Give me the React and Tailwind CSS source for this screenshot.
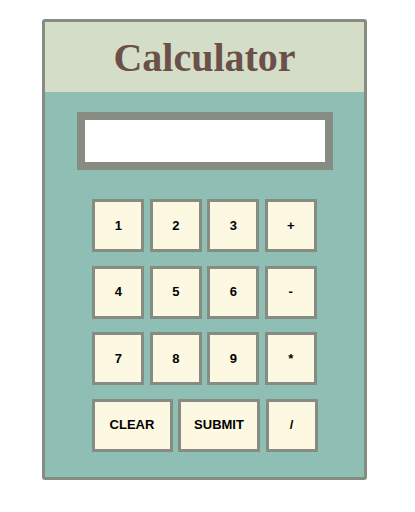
export default function App() {
  const rows = [
    ["1", "2", "3", "+"],
    ["4", "5", "6", "-"],
    ["7", "8", "9", "*"],
  ];
  const btn =
    "h-[53px] border-[3px] border-[#878c83] bg-[#fdf8e2] text-[13px] font-bold text-black flex items-center justify-center";
  return (
    <div className="w-[415px] h-[512px] bg-white pt-[19px] pl-[42px]" style={{ fontFamily: '"Liberation Sans", Arial, sans-serif' }}>
      <div className="w-[325px] h-[461px] border-[3px] border-[#878c83] rounded-[3px] bg-[#8fbfb4] flex flex-col">
        <div className="h-[70px] bg-[#d3ddc8] flex items-center justify-center">
          <h1
            className="text-[40px] font-bold text-[#6b5049] leading-none pt-[2px]"
            style={{ fontFamily: '"Liberation Serif", "Times New Roman", serif' }}
          >
            Calculator
          </h1>
        </div>
        <div className="flex justify-center mt-[20px]">
          <div className="w-[256px] h-[58px] border-[8px] border-[#878c83] bg-white"></div>
        </div>
        <div className="flex flex-col items-center gap-[13.5px] mt-[29px]">
          {rows.map((r, i) => (
            <div key={i} className="flex gap-[5.5px]">
              {r.map((k) => (
                <div key={k} className={btn + " w-[52px]"}>
                  {k}
                </div>
              ))}
            </div>
          ))}
          <div className="flex gap-[5.5px]">
            <div className={btn + " w-[81px]"}>CLEAR</div>
            <div className={btn + " w-[82px]"}>SUBMIT</div>
            <div className={btn + " w-[52px]"}>/</div>
          </div>
        </div>
      </div>
    </div>
  );
}
